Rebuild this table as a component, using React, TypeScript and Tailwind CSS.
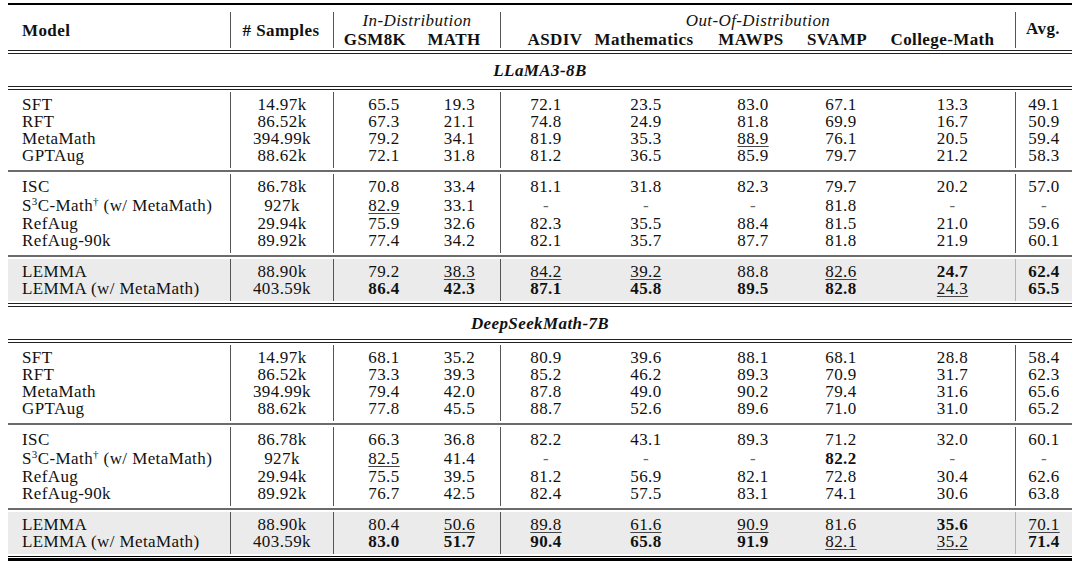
import clsx from 'clsx';

// column grid shared by header and body rows
const COLS = 'grid grid-cols-[223px_103px_88px_79px_93px_106px_96px_101px_119px_60px]';
const LINED = [true, true, false, true, false, false, false, false, true, false];
const DATA_PAD = ['pl-[14px] justify-start', '', 'pl-[12px]', 'pr-[3px]', 'pr-[3px]', 'pr-[2px]', 'pl-[10px]', 'pr-[11px]', 'pr-[7px]', 'pr-[4px]'];

type Row = { cells: string[]; tall?: boolean };

const S3C = 'S3C';

const llama: Row[][] = [
  [
    { cells: ['SFT', '14.97k', '65.5', '19.3', '72.1', '23.5', '83.0', '67.1', '13.3', '49.1'] },
    { cells: ['RFT', '86.52k', '67.3', '21.1', '74.8', '24.9', '81.8', '69.9', '16.7', '50.9'] },
    { cells: ['MetaMath', '394.99k', '79.2', '34.1', '81.9', '35.3', '_88.9', '76.1', '20.5', '59.4'] },
    { cells: ['GPTAug', '88.62k', '72.1', '31.8', '81.2', '36.5', '85.9', '79.7', '21.2', '58.3'] },
  ],
  [
    { cells: ['ISC', '86.78k', '70.8', '33.4', '81.1', '31.8', '82.3', '79.7', '20.2', '57.0'] },
    { cells: [S3C, '927k', '_82.9', '33.1', '-', '-', '-', '81.8', '-', '-'], tall: true },
    { cells: ['RefAug', '29.94k', '75.9', '32.6', '82.3', '35.5', '88.4', '81.5', '21.0', '59.6'] },
    { cells: ['RefAug-90k', '89.92k', '77.4', '34.2', '82.1', '35.7', '87.7', '81.8', '21.9', '60.1'] },
  ],
  [
    { cells: ['LEMMA', '88.90k', '79.2', '_38.3', '_84.2', '_39.2', '88.8', '_82.6', '*24.7', '*62.4'] },
    { cells: ['LEMMA (w/ MetaMath)', '403.59k', '*86.4', '*42.3', '*87.1', '*45.8', '*89.5', '*82.8', '_24.3', '*65.5'] },
  ],
];

const deepseek: Row[][] = [
  [
    { cells: ['SFT', '14.97k', '68.1', '35.2', '80.9', '39.6', '88.1', '68.1', '28.8', '58.4'] },
    { cells: ['RFT', '86.52k', '73.3', '39.3', '85.2', '46.2', '89.3', '70.9', '31.7', '62.3'] },
    { cells: ['MetaMath', '394.99k', '79.4', '42.0', '87.8', '49.0', '90.2', '79.4', '31.6', '65.6'] },
    { cells: ['GPTAug', '88.62k', '77.8', '45.5', '88.7', '52.6', '89.6', '71.0', '31.0', '65.2'] },
  ],
  [
    { cells: ['ISC', '86.78k', '66.3', '36.8', '82.2', '43.1', '89.3', '71.2', '32.0', '60.1'] },
    { cells: [S3C, '927k', '_82.5', '41.4', '-', '-', '-', '*82.2', '-', '-'], tall: true },
    { cells: ['RefAug', '29.94k', '75.5', '39.5', '81.2', '56.9', '82.1', '72.8', '30.4', '62.6'] },
    { cells: ['RefAug-90k', '89.92k', '76.7', '42.5', '82.4', '57.5', '83.1', '74.1', '30.6', '63.8'] },
  ],
  [
    { cells: ['LEMMA', '88.90k', '80.4', '_50.6', '_89.8', '_61.6', '_90.9', '81.6', '*35.6', '_70.1'] },
    { cells: ['LEMMA (w/ MetaMath)', '403.59k', '*83.0', '*51.7', '*90.4', '*65.8', '*91.9', '_82.1', '_35.2', '*71.4'] },
  ],
];

function Value({ v }: { v: string }) {
  if (v === S3C) {
    return (
      <span>
        S<sup className="text-[11px] relative -top-[6px]">3</sup>C-Math<sup className="text-[11px] relative -top-[6px]">†</sup> (w/ MetaMath)
      </span>
    );
  }
  if (v === '-') return <span className="text-[#666]">-</span>;
  if (v.startsWith('*')) return <span className="font-bold">{v.slice(1)}</span>;
  if (v.startsWith('_')) return <span className="underline decoration-[1px] underline-offset-[2px] decoration-[#444]">{v.slice(1)}</span>;
  return <span>{v}</span>;
}

function Group({ rows, shaded }: { rows: Row[]; shaded?: boolean }) {
  return (
    <div className="py-[2px]">
      <div className={clsx(COLS, shaded && 'bg-[#ebebeb]')}>
        {DATA_PAD.map((pad, c) => (
          <div
            key={c}
            className={clsx(
              'flex flex-col py-[4px]',
              LINED[c] && 'border-r',
              LINED[c] && (shaded && c === 8 ? 'border-[#b5b5b5]' : 'border-[#555]')
            )}
          >
            {rows.map((r, i) => (
              <div key={i} className={clsx('flex items-center justify-center whitespace-nowrap', pad, r.tall ? 'h-[20px]' : 'h-[17px]')}>
                <Value v={r.cells[c]} />
              </div>
            ))}
          </div>
        ))}
      </div>
    </div>
  );
}

function DoubleRule() {
  return (
    <div className="flex flex-col">
      <div className="h-px bg-[#222]" />
      <div className="h-[2px]" />
      <div className="h-px bg-[#222]" />
    </div>
  );
}

function Thin() {
  return <div className="h-[2px] bg-[#6b6b6b]" />;
}

function Section({ title, groups }: { title: string; groups: Row[][] }) {
  return (
    <>
      <div className="h-[32px] flex items-center justify-center font-bold italic">{title}</div>
      <DoubleRule />
      <Group rows={groups[0]} />
      <Thin />
      <Group rows={groups[1]} />
      <Thin />
      <Group rows={groups[2]} shaded />
    </>
  );
}

export default function App() {
  return (
    <div className="w-[1080px] h-[580px] bg-white pt-[3px] px-[8px] text-[#111] text-[17px] leading-[17px] tracking-[0.4px] font-[Liberation_Serif,Times_New_Roman,serif]">
      <div className="h-[2px] bg-black" />
      {/* header */}
      <div className="pt-[7px] pb-[2px]">
        <div className={clsx(COLS, 'h-[36px]')}>
          <div className="border-r border-[#555] flex items-center pl-[14px] font-bold">Model</div>
          <div className="border-r border-[#555] flex items-center justify-center font-bold">
            <span className="pr-[2px]"># Samples</span>
          </div>
          <div className="col-span-2 border-r border-[#555] flex flex-col">
            <div className="h-[17px] flex items-center justify-center italic">In-Distribution</div>
            <div className="grid grid-cols-[88px_79px] font-bold mt-[2px]">
              <div className="h-[17px] flex items-center justify-center pr-[6px]">GSM8K</div>
              <div className="h-[17px] flex items-center justify-center pr-[15px]">MATH</div>
            </div>
          </div>
          <div className="col-span-5 border-r border-[#555] flex flex-col">
            <div className="h-[17px] flex items-center justify-center italic">Out-Of-Distribution</div>
            <div className="grid grid-cols-[93px_106px_96px_101px_118px] font-bold mt-[2px]">
              <div className="h-[17px] flex items-center justify-center pl-[15px]">ASDIV</div>
              <div className="h-[17px] flex items-center justify-center pr-[6px]">Mathematics</div>
              <div className="h-[17px] flex items-center justify-center pl-[6px]">MAWPS</div>
              <div className="h-[17px] flex items-center justify-center pr-[19px]">SVAMP</div>
              <div className="h-[17px] flex items-center justify-center pr-[27px] whitespace-nowrap">College-Math</div>
            </div>
          </div>
          <div className="flex items-center justify-center font-bold pr-[6px] pb-[4px]">Avg.</div>
        </div>
      </div>
      <DoubleRule />
      <Section title="LLaMA3-8B" groups={llama} />
      <DoubleRule />
      <Section title="DeepSeekMath-7B" groups={deepseek} />
      <div className="flex flex-col">
        <div className="h-px bg-black" />
        <div className="h-px" />
        <div className="h-[3px] bg-black" />
      </div>
    </div>
  );
}
